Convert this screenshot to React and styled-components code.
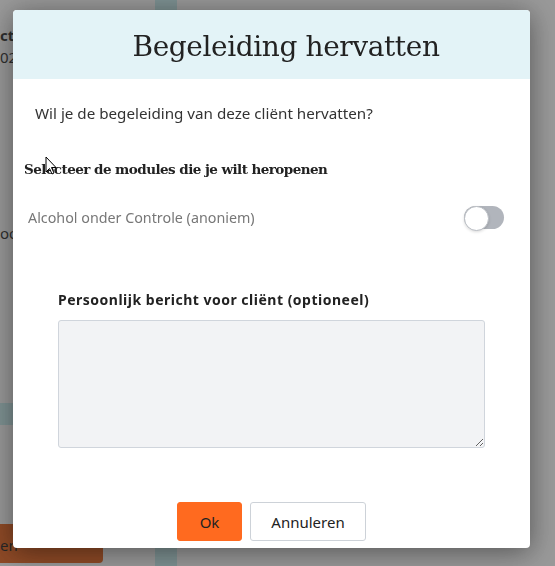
import styled, { createGlobalStyle } from "styled-components";

const GlobalStyle = createGlobalStyle`
  html, body {
    margin: 0;
    padding: 0;
    width: 555px;
    height: 566px;
    overflow: hidden;
    font-family: "Noto Sans", "Open Sans", sans-serif;
  }
  * { box-sizing: border-box; }
`;

const Page = styled.div`
  display: flex;
  width: 555px;
  height: 566px;
  background: #ffffff;
`;

const SideCol = styled.div`
  width: 155px;
  display: flex;
  flex-direction: column;
  padding-top: 24px;
`;

const BgText = styled.div`
  font-size: 15px;
  line-height: 22px;
  color: #222;
  font-weight: ${(p) => (p.bold ? 700 : 400)};
  margin-top: ${(p) => p.top || 0}px;
  white-space: nowrap;
`;

const BgStrip = styled.div`
  width: ${(p) => p.w}px;
  height: 22px;
  background: #c8f0f2;
  margin-top: ${(p) => p.top}px;
`;

const BgButton = styled.div`
  width: 103px;
  height: 39px;
  margin-top: auto;
  margin-bottom: 3px;
  background: #e85a10;
  border-radius: 0 4px 4px 0;
  color: #111;
  font-size: 15px;
  display: flex;
  align-items: center;
  padding-top: 2px;
`;

const TealColumn = styled.div`
  width: 22px;
  background: #c6eff1;
`;

const Overlay = styled.div`
  position: fixed;
  inset: 0;
  background: rgba(60, 60, 60, 0.52);
  padding: 10px 25px 18px 13px;
`;

const Modal = styled.div`
  width: 517px;
  height: 538px;
  background: #fff;
  border-radius: 4px;
  box-shadow: 0 4px 28px rgba(0, 0, 0, 0.45);
  display: flex;
  flex-direction: column;
  overflow: hidden;
`;

const Header = styled.div`
  height: 69px;
  background: #e3f3f7;
  display: flex;
  align-items: center;
  justify-content: center;
  padding-left: 29px;
`;

const Title = styled.h1`
  margin: 0;
  font-family: "DejaVu Serif", "Liberation Serif", serif;
  font-weight: 400;
  font-size: 28px;
  color: #222;
  padding-top: 4px;
  letter-spacing: -0.4px;
`;

const Body = styled.div`
  display: flex;
  flex-direction: column;
  flex: 1;
  padding: 24px 26px 7px 11px;
`;

const Question = styled.p`
  margin: 0 0 0 11px;
  font-size: 15.2px;
  line-height: 20px;
  color: #333;
`;

const SectionTitle = styled.h2`
  margin: 36px 0 0 0;
  font-family: "DejaVu Serif", "Liberation Serif", serif;
  font-size: 13.5px;
  line-height: 20px;
  font-weight: 700;
  color: #222;
  letter-spacing: -0.55px;
`;

const ModuleRow = styled.div`
  margin-top: 27px;
  display: flex;
  align-items: center;
  justify-content: space-between;
  padding-left: 4px;
`;

const ModuleName = styled.span`
  font-size: 14.3px;
  color: #777;
`;

const Toggle = styled.div`
  width: 40px;
  height: 23px;
  border-radius: 12px;
  background: #b1b5bc;
  position: relative;
  &::after {
    content: "";
    position: absolute;
    left: 0;
    top: 0;
    width: 23px;
    height: 23px;
    border-radius: 50%;
    background: #fff;
    border: 1px solid #b9bdc3;
    box-shadow: 0 1px 3px rgba(0, 0, 0, 0.15);
  }
`;

const Field = styled.div`
  margin: 61px 0 0 34px;
  width: 427px;
  display: flex;
  flex-direction: column;
`;

const FieldLabel = styled.label`
  font-size: 14px;
  line-height: 20px;
  font-weight: 700;
  color: #222;
  letter-spacing: 0.5px;
`;

const TextArea = styled.textarea`
  margin-top: 10px;
  width: 427px;
  height: 128px;
  background: #f2f3f5;
  border: 1px solid #d0d5dc;
  border-radius: 3px;
  resize: vertical;
  font-family: inherit;
  outline: none;
`;

const Actions = styled.div`
  margin: auto -15px 0 0;
  display: flex;
  justify-content: center;
  gap: 8px;
`;

const Button = styled.button`
  height: 39px;
  width: ${(p) => (p.primary ? 65 : 116)}px;
  padding: 0;
  border-radius: 3px;
  font-family: "Noto Sans", sans-serif;
  font-size: 15px;
  color: #222;
  background: ${(p) => (p.primary ? "#ff6a1f" : "#fff")};
  border: 1px solid ${(p) => (p.primary ? "#ff6a1f" : "#cdd2d8")};
`;

const Cursor = styled.svg`
  position: fixed;
  left: 45px;
  top: 156px;
  width: 12px;
  height: 19px;
`;

export default function App() {
  return (
    <>
      <GlobalStyle />
      <Page>
        <SideCol>
          <BgText bold>ct</BgText>
          <BgText>02</BgText>
          <BgText top={154}>oo</BgText>
          <BgStrip w={13} top={159} />
          <BgButton>en</BgButton>
        </SideCol>
        <TealColumn />
      </Page>
      <Overlay>
        <Modal>
          <Header>
            <Title>Begeleiding hervatten</Title>
          </Header>
          <Body>
            <Question>Wil je de begeleiding van deze cliënt hervatten?</Question>
            <SectionTitle>Selecteer de modules die je wilt heropenen</SectionTitle>
            <ModuleRow>
              <ModuleName>Alcohol onder Controle (anoniem)</ModuleName>
              <Toggle />
            </ModuleRow>
            <Field>
              <FieldLabel>Persoonlijk bericht voor cliënt (optioneel)</FieldLabel>
              <TextArea />
            </Field>
            <Actions>
              <Button primary>Ok</Button>
              <Button>Annuleren</Button>
            </Actions>
          </Body>
        </Modal>
      </Overlay>
      <Cursor viewBox="0 0 12 19">
        <path d="M1 1 L1 16 L4.5 12.5 L7 18 L9 17 L6.5 11.5 L11 11.5 Z" fill="#fff" stroke="#000" strokeWidth="1" strokeLinejoin="round" />
      </Cursor>
    </>
  );
}
